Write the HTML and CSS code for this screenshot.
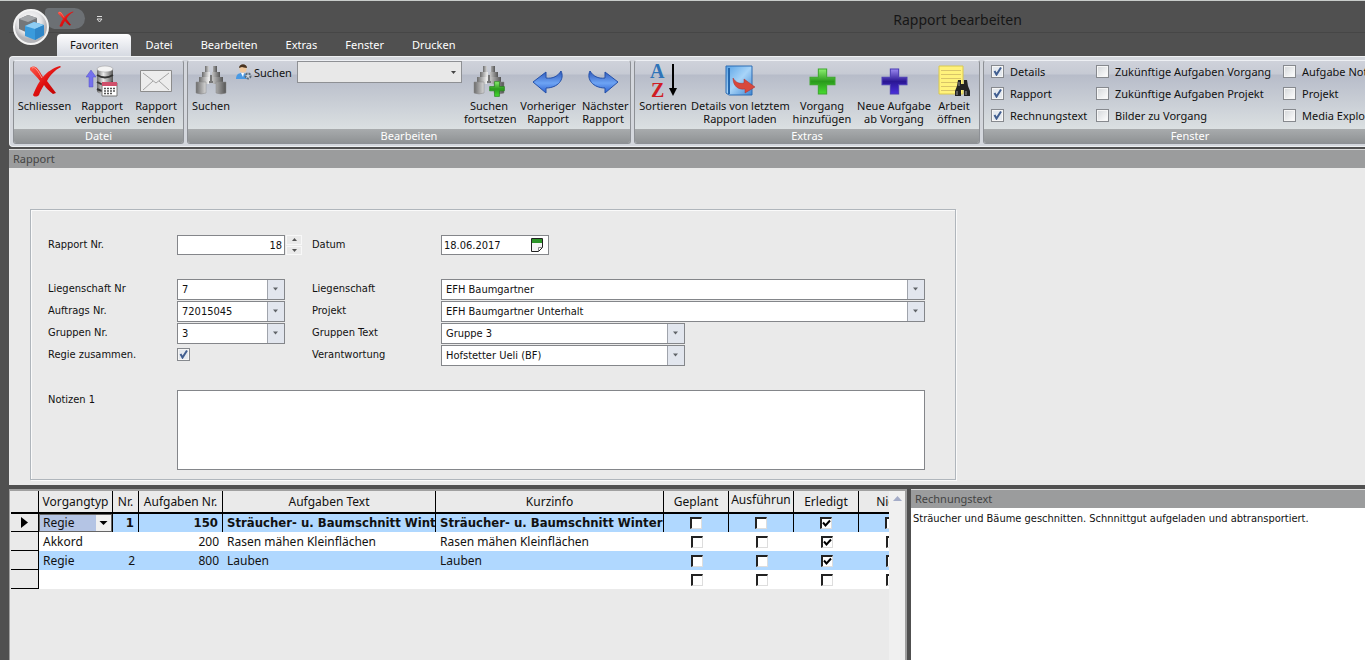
FILE: index.html
```html
<!DOCTYPE html>
<html lang="de">
<head>
    <meta charset="UTF-8">
    <meta name="viewport" content="width=device-width, initial-scale=1.0">
    <title>Rapport bearbeiten</title>
    <link rel="stylesheet" href="styles.css">
</head>
<body>
    <svg class="defs" width="0" height="0" aria-hidden="true">
        <defs>
            <linearGradient id="metal"><stop offset="0" stop-color="#6b6b6b"/><stop offset=".4" stop-color="#ececec"/><stop offset="1" stop-color="#555"/></linearGradient>
            <linearGradient id="red" x2="1" y2="1"><stop offset="0" stop-color="#ff5a4a"/><stop offset=".5" stop-color="#e01010"/><stop offset="1" stop-color="#b80000"/></linearGradient>
            <linearGradient id="blue" x2="0" y2="1"><stop offset="0" stop-color="#2b55b8"/><stop offset=".55" stop-color="#6ea4f4"/><stop offset="1" stop-color="#2a5fd0"/></linearGradient>
            <linearGradient id="book" x2="1" y2="1"><stop offset="0" stop-color="#5aa4e6"/><stop offset=".5" stop-color="#a8d4f8"/><stop offset="1" stop-color="#3f86d2"/></linearGradient>
            <linearGradient id="green" x2="0" y2="1"><stop offset="0" stop-color="#8cf070"/><stop offset=".5" stop-color="#2a9a1c"/><stop offset="1" stop-color="#46dc30"/></linearGradient>
            <linearGradient id="violet" x2="0" y2="1"><stop offset="0" stop-color="#9a88f0"/><stop offset=".5" stop-color="#2a1694"/><stop offset="1" stop-color="#4a30dc"/></linearGradient>
            <radialGradient id="orb" cx=".45" cy=".35"><stop offset="0" stop-color="#fff"/><stop offset=".7" stop-color="#e4e4e6"/><stop offset="1" stop-color="#b4b4b8"/></radialGradient>
            <symbol id="cross" viewBox="0 0 32 32">
                <path d="M1 3c2-2 5-2 7 0 3 3 4 6 6 9C18 7 24 3 31 1l1 1c-6 3-11 8-14 14 3 4 6 8 9 12l-3 1c-4-3-7-6-9-9-2 3-4 7-5 10-2 2-5 2-6 0 2-5 4-10 7-14C8 12 4 8 1 5z" fill="url(#red)"/>
                <path d="M3 3c2-1 3 0 4 1 3 3 4 6 6 9" fill="none" stroke="#ff9a8c"/>
            </symbol>
            <symbol id="binoculars" viewBox="0 0 32 32">
                <path d="M12 10h8v8h-8z" fill="#777"/>
                <path d="M10 1h4v7h-4zM18 1h4v7h-4z" fill="url(#metal)"/>
                <path d="M7 7h8v9H7zM17 7h8v9h-8z" fill="url(#metal)"/>
                <path d="M4 12h10v7H4zM18 12h10v7H18z" fill="url(#metal)"/>
                <path d="M1 17h10v11q-5 2-10 0zM21 17h10v11q-5 2-10 0z" fill="url(#metal)" stroke="#888" stroke-width=".5"/>
            </symbol>
            <symbol id="plus" viewBox="0 0 26 26"><path d="M9 1h8v8h8v7h-8v9H9v-9H1V9h8z"/></symbol>
        </defs>
    </svg>

    <header class="titlebar">
        <button class="orb" type="button" aria-label="Anwendungsmenü">
            <svg width="38" height="38" viewBox="0 0 38 38">
                <circle cx="19" cy="19" r="17" fill="url(#orb)" stroke="#f4f4f4" stroke-width="2"/>
                <path d="M7 11l9-4 9 3v11l-9 4-9-4z" fill="#74777a"/>
                <path d="M7 11l9-4 9 3-9 4z" fill="#a4a7aa"/>
                <path d="M13 18l9-4 10 3v10l-9 5-10-4z" fill="#3a9bdc"/>
                <path d="M13 18l9-4 10 3-9 4z" fill="#8fcdf2"/>
                <path d="M23 21l9-4v10l-9 5z" fill="#2f86c8"/>
            </svg>
        </button>
        <div class="quick">
            <button type="button" aria-label="Schliessen"><svg width="17" height="16"><use href="#cross"/></svg></button>
        </div>
        <button class="quick-more" type="button" aria-label="Symbolleiste anpassen">
            <svg width="7" height="7" viewBox="0 0 7 7" fill="none" stroke="#ddd"><path d="M1 .5h5M1 3l2.500 3L6 3z"/></svg>
        </button>
        <h1>Rapport bearbeiten</h1>
    </header>

    <nav class="tabs">
        <button class="active" type="button">Favoriten</button>
        <button type="button">Datei</button>
        <button type="button">Bearbeiten</button>
        <button type="button">Extras</button>
        <button type="button">Fenster</button>
        <button type="button">Drucken</button>
    </nav>

    <div class="ribbon">
        <section class="group">
            <div class="tools tools-file">
                <button type="button"><svg width="32" height="32"><use href="#cross"/></svg>Schliessen</button>
                <button type="button">
                    <svg width="32" height="32" viewBox="0 0 32 32">
                        <path d="M11 4v22c0 4 16 4 16 0V4z" fill="url(#metal)"/>
                        <ellipse cx="19" cy="4" rx="8" ry="3" fill="#f4f4f4" stroke="#999" stroke-width=".5"/>
                        <path d="M11 10q8 5 16 0M11 17q8 5 16 0M11 24q4 2 6 2" fill="none" stroke="#333" stroke-width="2"/>
                        <path d="M5 5l5 7H7v10H3V12H0z" fill="#7470ee" stroke="#5550c4" stroke-width=".5"/>
                        <path d="M16 18h15v13H16z" fill="#fff" stroke="#777"/>
                        <path d="M16 17h15v4H16z" fill="#d0506c"/>
                        <path d="M18 23.500h11M18 26h11M18 28.500h8" stroke="#555" stroke-width="1.500" stroke-dasharray="2 1"/>
                    </svg>Rapport<br>verbuchen
                </button>
                <button type="button">
                    <svg width="32" height="32" viewBox="0 0 32 32">
                        <path d="M.5 5.500h31v21H.5z" fill="#ececec" stroke="#8c8c8c"/>
                        <path d="M3 8l13 10L29 8M3 25l10-9M29 25l-10-9" fill="none" stroke="#a4a4a4"/>
                    </svg>Rapport<br>senden
                </button>
            </div>
            <h2>Datei</h2>
        </section>

        <section class="group">
            <div class="tools tools-edit">
                <button type="button"><svg width="32" height="32"><use href="#binoculars"/></svg>Suchen</button>
                <div class="search">
                    <label for="suche">
                        <svg width="16" height="16" viewBox="0 0 16 16">
                            <path d="M0 15c0-4 2-6 6-6s5 2 6 6z" fill="#4a9ae4"/>
                            <path d="M5 9h3l-1 4z" fill="#fff"/>
                            <circle cx="7" cy="5" r="3.500" fill="#f0c89c"/>
                            <path d="M3 4c0-5 8-5 8 0-3 0-4-1-5-1z" fill="#4a3420"/>
                            <circle cx="12" cy="12" r="2.500" fill="#ccd4dc" stroke="#5c6c7c" stroke-width="2" stroke-dasharray="2 1"/>
                        </svg>
                        Suchen
                    </label>
                    <select id="suche" class="search-box"><option></option></select>
                </div>
                <button type="button">
                    <svg width="32" height="32" viewBox="0 0 32 32">
                        <use href="#binoculars"/>
                        <use href="#plus" x="16" y="16" width="16" height="16" fill="url(#green)" stroke="#1c7c14"/>
                    </svg>Suchen<br>fortsetzen
                </button>
                <button type="button">
                    <svg width="32" height="32" viewBox="0 0 32 32"><path d="M1 17L14 7v6c7 1 12-2 15-7 4 8-3 17-15 17v5z" fill="url(#blue)" stroke="#2450a8"/></svg>Vorheriger<br>Rapport
                </button>
                <button type="button">
                    <svg width="32" height="32" viewBox="0 0 32 32"><path d="M31 17L18 7v6C11 14 6 11 3 6c-4 8 3 17 15 17v5z" fill="url(#blue)" stroke="#2450a8"/></svg>Nächster<br>Rapport
                </button>
            </div>
            <h2>Bearbeiten</h2>
        </section>

        <section class="group">
            <div class="tools tools-extras">
                <button type="button">
                    <svg class="sort" width="32" height="34" viewBox="0 0 32 34">
                        <text x="3" y="14" fill="#2f74b8">A</text>
                        <text x="4" y="33" fill="#d01c24">Z</text>
                        <path d="M26 0v27" stroke="#000" stroke-width="2"/>
                        <path d="M22 24h8l-4 8z"/>
                    </svg>Sortieren
                </button>
                <button type="button">
                    <svg width="32" height="32" viewBox="0 0 32 32">
                        <path d="M2 1h26v29H5l-3-2z" fill="url(#book)" stroke="#2c6cb4"/>
                        <path d="M5 3v26" stroke="#2468b0" stroke-width="2"/>
                        <path d="M9 13c3 5 7 6 11 5v-4l11 8-10 6v-4c-7 1-12-3-12-11z" fill="#d8483c" stroke="#a83030" stroke-width=".5"/>
                    </svg>Details von letztem<br>Rapport laden
                </button>
                <button type="button"><svg width="32" height="32" viewBox="0 0 32 32"><use href="#plus" x="3" y="3" width="27" height="27" fill="url(#green)" stroke="#3ca82c"/></svg>Vorgang<br>hinzufügen</button>
                <button type="button"><svg width="32" height="32" viewBox="0 0 32 32"><use href="#plus" x="3" y="3" width="27" height="27" fill="url(#violet)" stroke="#4a3cb4"/></svg>Neue Aufgabe<br>ab Vorgang</button>
                <button type="button">
                    <svg width="32" height="32" viewBox="0 0 32 32">
                        <path d="M1 1h24v28H1z" fill="#fff27c" stroke="#d8c850"/>
                        <path d="M3 5.500h20M3 9.500h20M3 13.500h20M3 17.500h20M3 21.500h20M3 25.500h20" stroke="#d8c468"/>
                        <path d="M20 15h3v4h3v-4h3l1 6 2 5v5h-6v-6h-3v6h-6v-5l2-5z" fill="#222"/>
                        <path d="M19 26v4M28 26v4M21 17v4" stroke="#999"/>
                    </svg>Arbeit<br>öffnen
                </button>
            </div>
            <h2>Extras</h2>
        </section>

        <section class="group group-window">
            <div class="checks">
                <label><input type="checkbox" checked>Details</label>
                <label><input type="checkbox">Zukünftige Aufgaben Vorgang</label>
                <label><input type="checkbox">Aufgabe Notizen</label>
                <label><input type="checkbox" checked>Rapport</label>
                <label><input type="checkbox">Zukünftige Aufgaben Projekt</label>
                <label><input type="checkbox">Projekt</label>
                <label><input type="checkbox" checked>Rechnungstext</label>
                <label><input type="checkbox">Bilder zu Vorgang</label>
                <label><input type="checkbox">Media Explorer</label>
            </div>
            <h2>Fenster</h2>
        </section>
    </div>

    <main>
        <section class="report">
            <h2 class="pane-title">Rapport</h2>
            <form class="report-form">
                <label for="rapportNr">Rapport Nr.</label>
                <div class="spin">
                    <input type="text" id="rapportNr" value="18">
                    <div class="spin-buttons">
                        <button type="button" aria-label="Erhöhen"><svg width="5" height="3"><path d="M0 3l2.500-3L5 3z" fill="#555"/></svg></button>
                        <button type="button" aria-label="Verringern"><svg width="5" height="3"><path d="M0 0l2.500 3L5 0z" fill="#555"/></svg></button>
                    </div>
                </div>
                <label for="datum">Datum</label>
                <div class="date">
                    <input type="text" id="datum" value="18.06.2017">
                    <button type="button" aria-label="Kalender">
                        <svg width="12" height="14" viewBox="0 0 12 14">
                            <path d="M.5.500h11v9l-4 4h-7z" fill="#f4f4f4" stroke="#222"/>
                            <path d="M1 1h10v4H1z" fill="#2c9428"/>
                            <path d="M11 9.500H7.500V13" fill="none" stroke="#888"/>
                        </svg>
                    </button>
                </div>

                <div class="spacer"></div>

                <label for="liegenschaftNr">Liegenschaft Nr</label>
                <select id="liegenschaftNr" class="short"><option>7</option></select>
                <label for="liegenschaft">Liegenschaft</label>
                <select id="liegenschaft"><option>EFH Baumgartner</option></select>

                <label for="auftragsNr">Auftrags Nr.</label>
                <select id="auftragsNr" class="short"><option>72015045</option></select>
                <label for="projekt">Projekt</label>
                <select id="projekt"><option>EFH Baumgartner Unterhalt</option></select>

                <label for="gruppenNr">Gruppen Nr.</label>
                <select id="gruppenNr" class="short"><option>3</option></select>
                <label for="gruppenText">Gruppen Text</label>
                <select id="gruppenText" class="medium"><option>Gruppe 3</option></select>

                <label for="regie">Regie zusammen.</label>
                <input type="checkbox" id="regie" checked>
                <label for="verantwortung">Verantwortung</label>
                <select id="verantwortung" class="medium"><option>Hofstetter Ueli (BF)</option></select>

                <div class="spacer"></div>

                <label for="notizen">Notizen 1</label>
                <textarea id="notizen"></textarea>
            </form>
        </section>

        <div class="bottom">
            <section class="tasks">
                <div class="grid-clip">
                    <table>
                        <colgroup>
                            <col class="col-mark"><col class="col-type"><col class="col-nr"><col class="col-task">
                            <col class="col-text"><col class="col-info">
                            <col class="col-check"><col class="col-check"><col class="col-check"><col class="col-check">
                        </colgroup>
                        <thead>
                            <tr><th></th><th>Vorgangtyp</th><th>Nr.</th><th>Aufgaben Nr.</th><th>Aufgaben Text</th><th>Kurzinfo</th><th>Geplant</th><th class="high">Ausführun</th><th>Erledigt</th><th>Nicht</th></tr>
                        </thead>
                        <tbody>
                            <tr class="current">
                                <th><svg width="7" height="11"><path d="M0 0l7 5.500L0 11z"/></svg></th>
                                <td class="type"><select aria-label="Vorgangtyp"><option>Regie</option></select></td>
                                <td class="num">1</td><td class="num">150</td>
                                <td>Sträucher- u. Baumschnitt Winter</td><td>Sträucher- u. Baumschnitt Winter</td>
                                <td class="tick"><input type="checkbox" aria-label="Geplant"></td>
                                <td class="tick"><input type="checkbox" aria-label="Ausführung"></td>
                                <td class="tick"><input type="checkbox" aria-label="Erledigt" checked></td>
                                <td class="tick"><input type="checkbox" aria-label="Nicht"></td>
                            </tr>
                            <tr>
                                <th></th><td>Akkord</td><td></td><td class="num">200</td>
                                <td>Rasen mähen Kleinflächen</td><td>Rasen mähen Kleinflächen</td>
                                <td class="tick"><input type="checkbox" aria-label="Geplant"></td>
                                <td class="tick"><input type="checkbox" aria-label="Ausführung"></td>
                                <td class="tick"><input type="checkbox" aria-label="Erledigt" checked></td>
                                <td class="tick"><input type="checkbox" aria-label="Nicht"></td>
                            </tr>
                            <tr class="alt">
                                <th></th><td>Regie</td><td class="num">2</td><td class="num">800</td>
                                <td>Lauben</td><td>Lauben</td>
                                <td class="tick"><input type="checkbox" aria-label="Geplant"></td>
                                <td class="tick"><input type="checkbox" aria-label="Ausführung"></td>
                                <td class="tick"><input type="checkbox" aria-label="Erledigt" checked></td>
                                <td class="tick"><input type="checkbox" aria-label="Nicht"></td>
                            </tr>
                            <tr>
                                <th></th><td></td><td></td><td></td><td></td><td></td>
                                <td class="tick"><input type="checkbox" aria-label="Geplant"></td>
                                <td class="tick"><input type="checkbox" aria-label="Ausführung"></td>
                                <td class="tick"><input type="checkbox" aria-label="Erledigt"></td>
                                <td class="tick"><input type="checkbox" aria-label="Nicht"></td>
                            </tr>
                        </tbody>
                    </table>
                </div>
                <div class="scrollbar"><svg width="9" height="5"><path d="M0 5l4.500-5L9 5z" fill="#a4acc8"/></svg></div>
            </section>
            <section class="invoice">
                <h2 class="pane-title"><label for="rechnungstext">Rechnungstext</label></h2>
                <textarea id="rechnungstext">Sträucher und Bäume geschnitten. Schnnittgut aufgeladen und abtransportiert.</textarea>
            </section>
        </div>
    </main>
</body>
</html>
```
FILE: styles.css
```css
* { box-sizing: border-box; }
body {
    margin: 0;
    height: 100vh;
    display: flex;
    flex-direction: column;
    overflow: hidden;
    background: #505050;
    border-top: 1px solid #c8ccca;
    padding-left: 9px;
    font: 11px/13px "Noto Sans", sans-serif;
    color: #111;
}
button, input, select, textarea { font: inherit; color: inherit; margin: 0; border-radius: 0; }
button { background: none; border: none; padding: 0; }
h1, h2 { margin: 0; font-weight: normal; }
h2 { font-size: 11px; }
.defs { position: absolute; }

/* title bar and tabs */
.titlebar { position: relative; display: flex; align-items: center; height: 32px; padding: 0 0 0 36px; border-bottom: 1px solid #464646; }
.orb { position: absolute; left: 3px; top: 7px; z-index: 1; height: 38px; }
.quick { display: flex; align-items: center; justify-content: center; width: 40px; height: 21px; margin-top: 4px; border-radius: 4px 11px 11px 12px; background: #6c7074; }
.quick button { height: 16px; }
.quick-more { display: flex; margin: 6px 0 0 11px; }
h1 { margin: 6px 26% 0 auto; font-size: 14px; line-height: 20px; color: #161616; }
.tabs { display: flex; height: 23px; padding: 1px 0 0 48px; }
.tabs button { padding: 0 14px; color: #fff; line-height: 22px; }
.tabs .active { padding: 0 13px; color: #111; background: linear-gradient(#fdfdfe, #d6dae2); border-radius: 4px 4px 0 0; }

/* ribbon */
.ribbon { display: flex; gap: 3px; height: 91px; padding: 3px 0 2px 3px; background: #d4d7dd; border: 1px solid #eef0f2; border-width: 1px 0 1px 1px; border-radius: 4px 0 0 4px; overflow: hidden; }
.group { flex: none; display: flex; flex-direction: column; border: 1px solid #8d9095; border-top-color: #eef0f4; border-radius: 3px; overflow: hidden; background: linear-gradient(#cfd2da 0, #c6cad4 13px, #b7bcc9 14px, #e4e9e8 100%); }
.group h2 { height: 14px; line-height: 14px; text-align: center; color: #fff; background: linear-gradient(#a8abad, #8f9294); }
.tools { flex: 1; display: grid; }
.tools-file { grid-template-columns: 61px 54px 54px; }
.tools-edit { grid-template-columns: 46px 230px 50px 68px 42px; padding-right: 6px; }
.tools-extras { grid-template-columns: 56px 98px 66px 78px 42px; padding-right: 4px; }
.tools > button { display: block; padding-top: 3px; line-height: 13px; white-space: nowrap; text-align: center; align-self: start; }
.tools > button svg { display: block; height: 34px; margin: 0 auto 1px; }
.tools > button .sort { font: bold 20px/1 "Liberation Serif", serif; overflow: visible; }
.search { display: flex; align-items: flex-start; justify-content: space-between; padding: 0 2px; }
.search label { display: flex; align-items: center; gap: 2px; height: 22px; }
.search .search-box { width: 165px; height: 22px; border: 1px solid #8e9094; background-color: #e8e8e8; background-image: url('data:image/svg+xml,<svg xmlns="http://www.w3.org/2000/svg" width="15" height="20"><path d="M5 9h5l-2.500 3z" fill="%23444"/></svg>'); }
.group-window { width: 414px; }
.checks { flex: 1; display: grid; grid-template-columns: 105px 187px 1fr; grid-auto-rows: 22px; padding-left: 7px; }
.checks label { display: flex; align-items: center; gap: 6px; height: 20px; white-space: nowrap; }

input[type="checkbox"] { appearance: none; flex: none; width: 13px; height: 13px; border: 1px solid #86898e; background: linear-gradient(135deg, #d4d7da, #fff); box-shadow: inset 0 0 0 1px #f6f6f6; }
input[type="checkbox"]:checked { background: url('data:image/svg+xml,<svg xmlns="http://www.w3.org/2000/svg" width="11" height="11"><path d="M2.500 5l2 3.500L9 1.500" fill="none" stroke="%23405e90" stroke-width="2"/></svg>') #e4e9ef; }

/* report form */
main { flex: 1; display: flex; flex-direction: column; min-height: 0; margin-top: 2px; }
.pane-title { height: 19px; padding-left: 4px; line-height: 18px; color: #444; background: #9b9c9d; border-top: 1px solid #d8d8d8; }
.report { padding-bottom: 5px; background: #eaeaea; }
.report-form {
    display: grid;
    grid-template-columns: 129px 135px 129px 1fr;
    row-gap: 1px;
    max-width: 926px;
    margin: 41px 21px 0;
    padding: 25px 30px 9px 17px;
    border: 1px solid #b0b6bc;
    box-shadow: inset 1px 1px #fafafa, 1px 1px #fafafa;
    font: 11px/13px "DejaVu Sans Condensed", "DejaVu Sans", sans-serif;
}
.report-form > label { padding-top: 3px; }
.spacer { grid-column: 1 / -1; height: 22px; }
.spin { display: flex; gap: 1px; }
.spin input, .date { width: 108px; height: 20px; border: 1px solid #84868a; background: #fff; }
.spin input { padding: 0 2px; text-align: right; }
.spin-buttons { display: flex; flex-direction: column; gap: 1px; width: 16px; }
.spin-buttons button { flex: 1; display: flex; align-items: center; justify-content: center; border: 1px solid #f8f8f8; }
.date { display: flex; align-items: center; padding: 0 5px 0 2px; }
.date input { flex: 1; min-width: 0; padding: 0; border: none; background: none; }
.date button { height: 14px; }
select { appearance: none; width: 100%; height: 21px; padding: 0 20px 0 4px; border: 1px solid #84868a; background: url('data:image/svg+xml,<svg xmlns="http://www.w3.org/2000/svg" width="17" height="19"><path d="M0 0h17v19H0z" fill="%23e2e6ee"/><path d="M.5 0v19" stroke="%23a0a4ac"/><path d="M6 7.500h5l-2.500 3z" fill="%23606468"/></svg>') right center no-repeat #fff; }
select.short { width: 108px; }
select.medium { width: 244px; }
.report-form input[type="checkbox"] { margin-top: 3px; }
.report-form textarea { grid-column: 2 / -1; height: 80px; }
textarea { display: block; width: 100%; border: 1px solid #84868a; background: #fff; resize: none; }

/* task table and invoice text */
.bottom { flex: 1; display: grid; grid-template-columns: 898fr 454fr; gap: 4px; min-height: 0; margin-top: 4px; }
.tasks { display: flex; min-width: 0; padding-left: 1px; background: #eaeaea; border: 1px solid #a0a0a0; border-width: 2px 2px 0 1px; }
.grid-clip { flex: 1; min-width: 0; overflow: hidden; }
.scrollbar { width: 16px; padding-top: 5px; text-align: center; background: #f0f0f0; }
.scrollbar svg { display: block; margin: 0 auto; }
table { width: 913px; table-layout: fixed; border-collapse: separate; border-spacing: 0; font: 12px/16px "Noto Sans", sans-serif; }
.col-mark { width: 28px; }
.col-type { width: 74px; }
.col-nr { width: 26px; }
.col-task { width: 84px; }
.col-text { width: 213px; }
.col-info { width: 228px; }
.col-check { width: 65px; }
th, td { padding: 0 4px; white-space: nowrap; overflow: hidden; }
th { font-weight: normal; background: #eaeaea; border-right: 1px solid #000; }
thead th { height: 23px; padding: 0; border-bottom: 2px solid #000; }
thead .high { padding-bottom: 4px; }
td { height: 19px; background: #fff; text-align: left; }
.current td, .current th { height: 18px; }
tbody th { padding: 0; border-bottom: 1px solid #000; }
tbody th svg { display: block; margin: 0 auto; }
.alt td, .current td { background: #b0d8ff; }
.current td { font: bold 13px/16px "DejaVu Sans Condensed", "DejaVu Sans", sans-serif; border-right: 1px solid #000; }
td.num { text-align: right; }
td.type { padding: 0; }
td.type select { display: block; height: 18px; padding: 0 16px 0 3px; font: 12px/16px "Noto Sans", sans-serif; border: 1px solid #666; background: url('data:image/svg+xml,<svg xmlns="http://www.w3.org/2000/svg" width="15" height="16"><path d="M0 0h15v16H0z" fill="%23f0f0f0"/><path d="M3.500 6h8l-4 4z"/></svg>') right center no-repeat #b4c4e4; }
.tick input[type="checkbox"] { display: block; width: 12px; height: 12px; margin: 0 auto; border: 2px solid #222; border-width: 2px 1px 1px 2px; border-right-color: #ddd; border-bottom-color: #ddd; background: #fff; box-shadow: none; }
.tick input[type="checkbox"]:checked { background: url('data:image/svg+xml,<svg xmlns="http://www.w3.org/2000/svg" width="9" height="9"><path d="M1 3.500l2.500 3L8 1.500" fill="none" stroke="%23000" stroke-width="2"/></svg>') #fff; }
.invoice { display: flex; flex-direction: column; min-width: 0; background: #fff; }
.invoice textarea { flex: 1; padding: 3px 2px; border: none; font: 11px/16px "DejaVu Sans Condensed", "DejaVu Sans", sans-serif; }
```
